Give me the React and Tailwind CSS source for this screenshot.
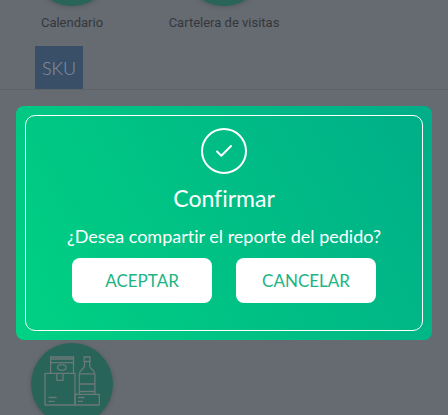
const shortcuts = ["Calendario", "Cartelera de visitas"];

function ShortcutCircle({ children }) {
    return (
        <div className="flex size-[82px] shrink-0 items-center justify-center rounded-full bg-[#29645a] shadow-[0_1px_4px_rgba(40,60,60,0.35)]">
            {children}
        </div>
    );
}

function ProductsIcon() {
    return (
        <svg viewBox="0 0 56 50" className="mb-1.5 h-[50px] w-14" fill="none" stroke="#697a78" strokeWidth="1.3" strokeLinejoin="round" aria-hidden="true">
            {/* Bag */}
            <path d="M6.600 17V1h22.900v16M6.600 3h22.900M6.600 6.700h22.900" />
            <ellipse cx="17.800" cy="11.500" rx="4.300" ry="2.800" />
            {/* Box */}
            <path d="M1 17.300h30v31.700H1zM12.800 17.300v7h6.200v-7" />
            <path d="M4.500 41.500h8M4.500 45.300h6" />
            {/* Bottle */}
            <path d="M40.200 1h5.800v4.500h-5.800zM40.500 5.500v4.500c0 3-5.200 3.800-5.200 8v20.300M45.700 5.500v4.500c0 3 5.200 3.800 5.200 8v20.300M35.300 17.800h15.600M35.300 28h15.600M35.300 35.500h15.600" />
            {/* Small box */}
            <path d="M31 38.300h24.300v10.700H31zM34 41.500h6.500M34 45.300h5" />
        </svg>
    );
}

function CheckBadge() {
    return (
        <div className="flex size-[46px] items-center justify-center rounded-full border-2 border-white">
            <svg viewBox="0 0 18 14" className="h-3.5 w-[18px]" fill="none" stroke="white" strokeWidth="2" strokeLinecap="round" strokeLinejoin="round" aria-hidden="true">
                <path d="M2 7.500 6.300 11.700 16 2" />
            </svg>
        </div>
    );
}

function DialogButton({ children }) {
    return (
        <button type="button" className="h-[45px] flex-1 rounded-lg bg-white text-[17px] text-[#20b483]">
            {children}
        </button>
    );
}

function ConfirmDialog() {
    return (
        <div className="fixed inset-0 px-4 pt-[106px]">
            <div
                role="dialog"
                aria-modal="true"
                aria-labelledby="confirm-title"
                className="rounded-lg bg-linear-[60deg,#00d284_0%,#00c184_45%,#00ae89_100%] p-[9px] font-[Lato,sans-serif] text-white [font-variant-ligatures:none]"
            >
                <div className="flex flex-col items-center rounded-[10px] border border-white px-[46px] pt-3 pb-[27px]">
                    <CheckBadge />
                    <h2 id="confirm-title" className="mt-2 text-[23px] leading-8">Confirmar</h2>
                    <p className="mt-2 text-lg leading-7 whitespace-nowrap">¿Desea compartir el reporte del pedido?</p>
                    <div className="mt-2 flex w-full gap-6">
                        <DialogButton>ACEPTAR</DialogButton>
                        <DialogButton>CANCELAR</DialogButton>
                    </div>
                </div>
            </div>
        </div>
    );
}

export default function App() {
    return (
        <div className="h-screen overflow-hidden bg-[#666a71] font-[Roboto,sans-serif]">
            <header className="border-b border-[#5f6368]">
                <nav className="grid grid-cols-3 gap-6 px-2">
                    {shortcuts.map((label) => (
                        <a key={label} href="#" className="-mt-[76px] flex flex-col items-center gap-2 text-[13px] leading-[18px] whitespace-nowrap text-[#34383c]">
                            <ShortcutCircle />
                            {label}
                        </a>
                    ))}
                </nav>
                <div className="mt-3.5 px-[35px]">
                    <button type="button" className="block h-[43px] w-12 bg-[#384f67] font-[Lato,sans-serif] text-lg font-light text-[#8793a0]">
                        SKU
                    </button>
                </div>
            </header>
            <main className="grid grid-cols-3 gap-6 px-2 pt-[253px]">
                <a href="#" aria-label="Productos" className="flex justify-center">
                    <ShortcutCircle>
                        <ProductsIcon />
                    </ShortcutCircle>
                </a>
            </main>
            <ConfirmDialog />
        </div>
    );
}
